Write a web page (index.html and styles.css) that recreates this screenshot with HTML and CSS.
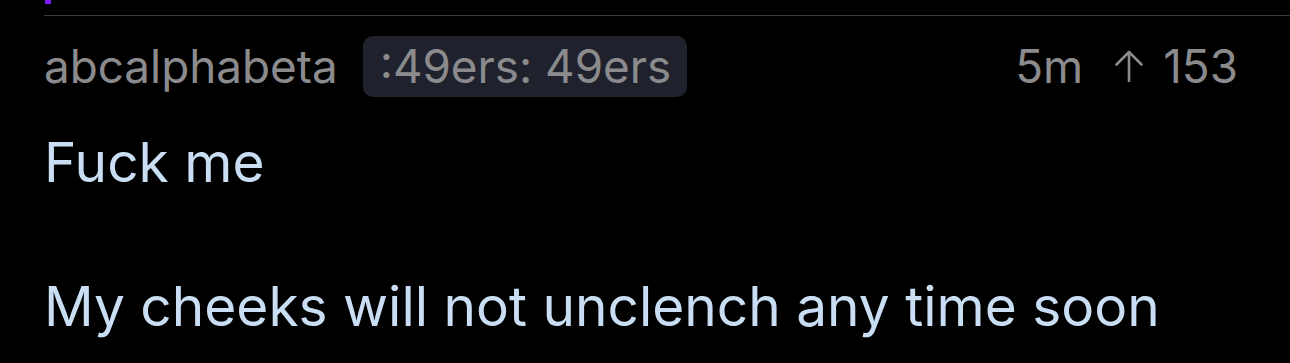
FILE: index.html
```html
<!DOCTYPE html>
<html>
<head>
<meta charset="utf-8">
<link rel="stylesheet" href="styles.css">
</head>
<body>
<div class="accent"></div>
<div class="divider"></div>
<article class="comment">
  <header class="meta">
    <span class="author">abcalphabeta</span>
    <span class="flair">:49ers: 49ers</span>
    <span class="spacer"></span>
    <span class="age">5m</span>
    <span class="score">
      <svg class="arrow" width="30" height="32" viewBox="0 0 30 32" aria-hidden="true">
        <path d="M15 2 V31 M2.5 14.5 L15 2 L27.5 14.5" fill="none" stroke="currentColor" stroke-width="2.6" stroke-linecap="round" stroke-linejoin="round"/>
      </svg>
      <span>153</span>
    </span>
  </header>
  <div class="body">
    <p>Fuck me</p>
    <p>My cheeks will not unclench any time soon</p>
  </div>
</article>
</body>
</html>
```

FILE: styles.css
```css
html, body {
  margin: 0;
  padding: 0;
  background: #000;
}
body {
  width: 1290px;
  height: 363px;
  overflow: hidden;
  font-family: Inter, "Liberation Sans", sans-serif;
}
.accent {
  width: 6px;
  height: 4px;
  margin-left: 45px;
  background: #7b1cff;
}
.divider {
  margin-top: 11px;
  margin-left: 44px;
  height: 1px;
  background: #3a3a3c;
}
.comment {
  padding: 20px 52px 0 44px;
}
.meta {
  display: flex;
  align-items: center;
  height: 61px;
  color: #8b8b8e;
  font-size: 45.8px;
}
.author {
  margin-right: 25px;
}
.flair {
  background: #1f222c;
  border-radius: 10px;
  height: 61px;
  display: flex;
  align-items: center;
  padding: 0 16px 0 17px;
}
.spacer { flex: 1; }
.age {
  margin-right: 31px;
}
.score {
  display: flex;
  align-items: center;
  gap: 19px;
}
.arrow {
  color: #8b8b8e;
  margin-top: -2px;
}
.body {
  color: #c9def3;
  font-size: 55px;
  line-height: 72px;
  margin-top: 29px;
}
.body p {
  margin: 0 0 72px;
}
```
